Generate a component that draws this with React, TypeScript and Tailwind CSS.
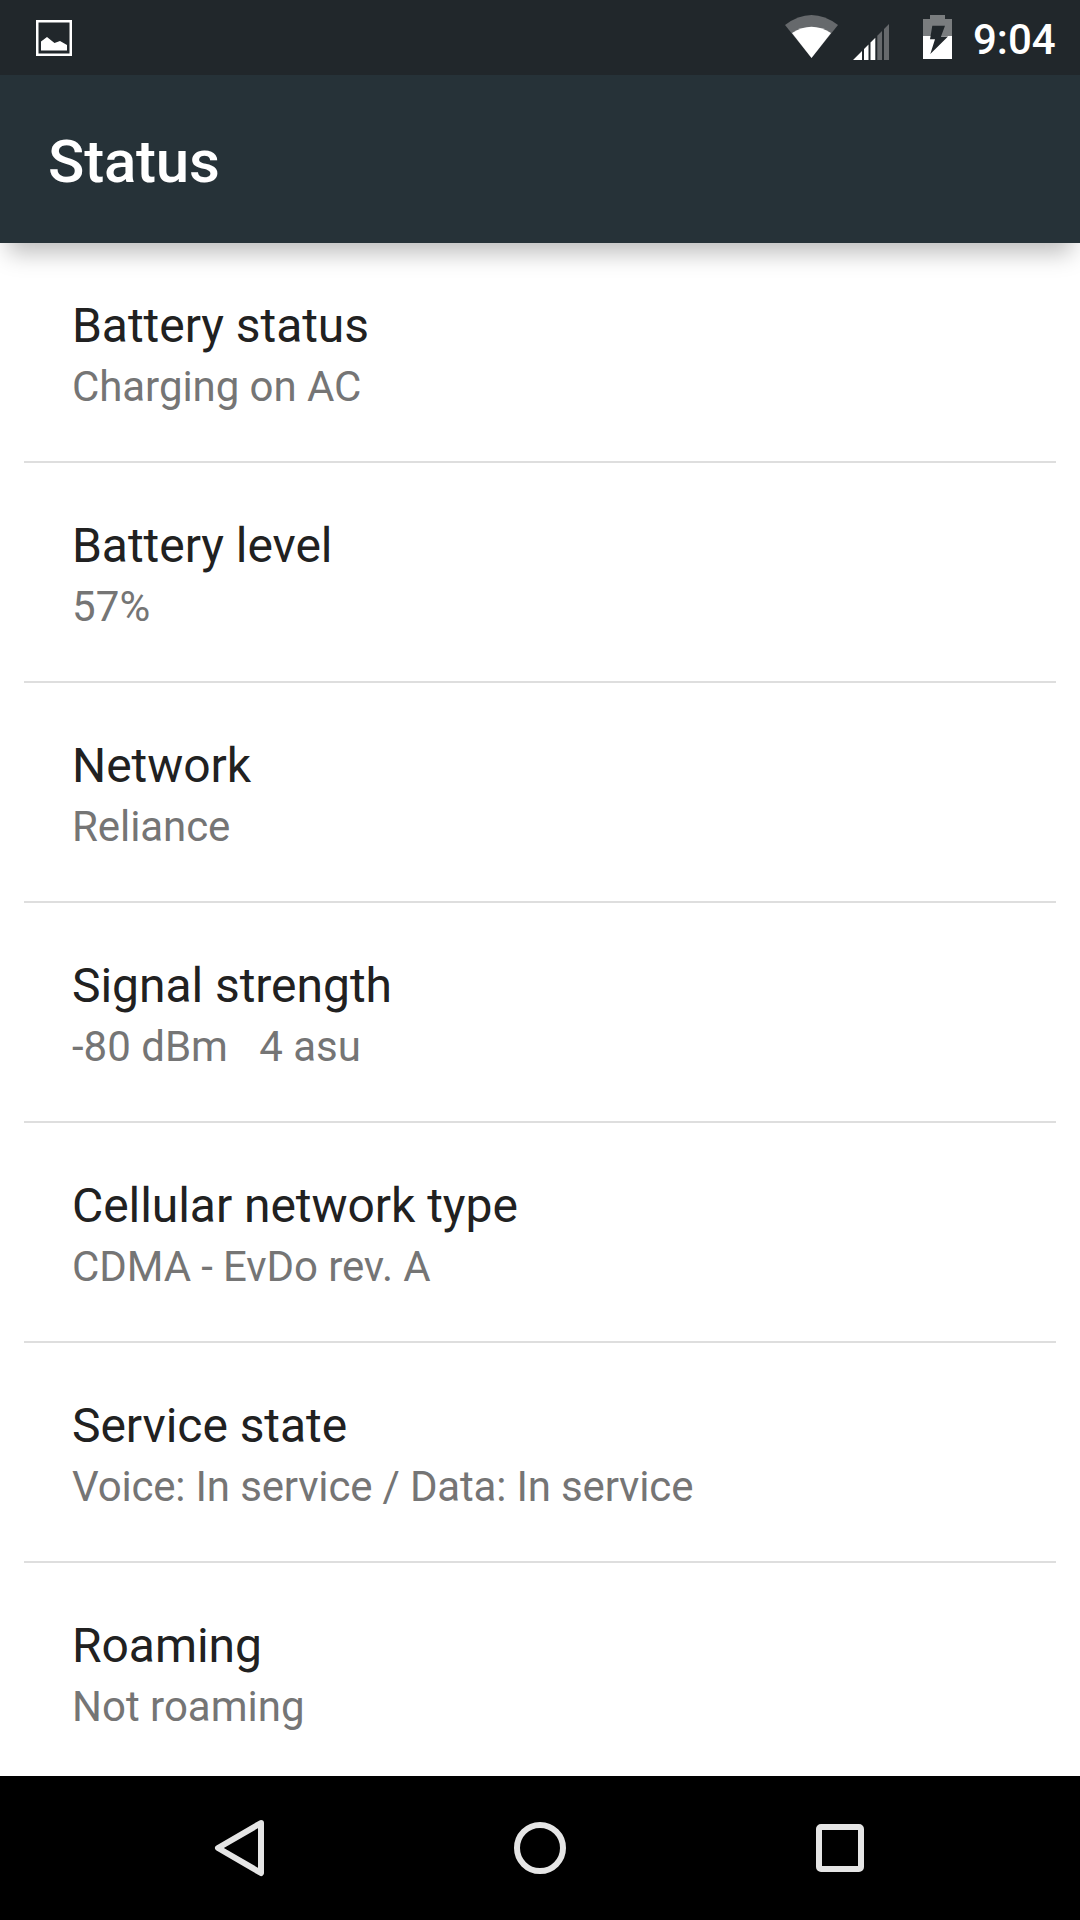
const items = [
  { title: "Battery status", summary: "Charging on AC", tracking: "tracking-[-0.07px]" },
  { title: "Battery level", summary: "57%", tracking: "tracking-[0.2px]" },
  { title: "Network", summary: "Reliance", tracking: "tracking-[-0.07px]" },
  { title: "Signal strength", summary: "-80 dBm   4 asu", tracking: "tracking-normal" },
  { title: "Cellular network type", summary: "CDMA - EvDo rev. A", tracking: "tracking-[-0.1px]" },
  { title: "Service state", summary: "Voice: In service / Data: In service", tracking: "tracking-[-0.17px]" },
  { title: "Roaming", summary: "Not roaming", tracking: "tracking-normal" },
];

const PictureIcon = () => (
  <svg width="36" height="37" viewBox="0 0 36 37">
    <rect x="1.25" y="2.25" width="33.5" height="33.5" fill="none" stroke="#fff" strokeWidth="2.5" />
    <path d="M5 31.5V22.5L11 18L18.5 24L24 22L31 26V31.500Z" fill="#fff" />
  </svg>
);

const WifiIcon = () => (
  <svg width="54" height="75" viewBox="0 0 54 75">
    <path d="M0 25Q26.5 5 53 25L26.5 58Z" fill="#66696c" />
    <path d="M7 33Q26.5 20.5 46 33L26.5 58Z" fill="#fff" />
  </svg>
);

const SignalIcon = () => (
  <svg width="36" height="75" viewBox="0 0 36 75">
    <path d="M0 60L9 51V60ZM11 49L15.5 44.5V60H11ZM17.5 42.5L22.3 37.7V60H17.5Z" fill="#fff" />
    <path d="M24.3 35.7L29 31V60H24.3ZM31 29L36 24V60H31Z" fill="#66696c" />
  </svg>
);

const BatteryIcon = () => (
  <svg width="29" height="75" viewBox="0 0 29 75">
    <path d="M7 15H22V19H29V36H0V19H7Z" fill="#7a7d7f" />
    <path d="M0 36H29V59H0Z" fill="#fff" />
    <path d="M9.3 25.7H22L18 36.5H25L7.3 54L12 39.3H7Z" fill="#21272b" />
  </svg>
);

const StatusBar = () => (
  <div className="flex h-[75px] shrink-0 items-center justify-between bg-[#21272b] pr-6 pl-9 text-white">
    <PictureIcon />
    <div className="flex items-center">
      <WifiIcon />
      <div className="ml-[14px]">
        <SignalIcon />
      </div>
      <div className="ml-[34px]">
        <BatteryIcon />
      </div>
      <span className="ml-[21px] w-[83px] pt-1 text-[42px] leading-[64px] font-medium">9:04</span>
    </div>
  </div>
);

const NavBar = () => (
  <nav className="flex h-[144px] shrink-0 items-center justify-center gap-[240px] bg-black">
    <svg width="60" height="60" viewBox="0 0 60 60" fill="none" stroke="#e5e5e5" strokeWidth="6">
      <path d="M51 5L8 30L51 55Z" strokeLinejoin="round" />
    </svg>
    <svg width="60" height="60" viewBox="0 0 60 60" fill="none" stroke="#e5e5e5" strokeWidth="6">
      <circle cx="30" cy="30" r="23" />
    </svg>
    <svg width="60" height="60" viewBox="0 0 60 60" fill="none" stroke="#e5e5e5" strokeWidth="6">
      <rect x="9" y="9" width="42" height="42" rx="2" />
    </svg>
  </nav>
);

const App = () => {
  return (
    <div className="flex h-[1920px] w-[1080px] flex-col overflow-hidden bg-white font-['Roboto',sans-serif]">
      <StatusBar />
      <header className="z-10 flex h-[168px] shrink-0 items-center bg-[#263238] pt-[5px] pl-12 shadow-[0_18px_22px_-8px_rgba(0,0,0,0.26)]">
        <h1 className="text-[60px] font-medium tracking-[-0.2px] text-white">Status</h1>
      </header>
      <main className="flex-1 overflow-hidden px-6">
        {items.map((item) => (
          <div key={item.title} className="h-[220px] border-b-2 border-[#dedede] px-12 pt-[55px]">
            <h2 className="text-[48px] leading-[56px] tracking-[-0.05px] text-[#212121]">{item.title}</h2>
            <p className={`text-[42px] leading-[66px] whitespace-pre text-[#757575] ${item.tracking}`}>
              {item.summary}
            </p>
          </div>
        ))}
      </main>
      <NavBar />
    </div>
  );
};

export default App;
